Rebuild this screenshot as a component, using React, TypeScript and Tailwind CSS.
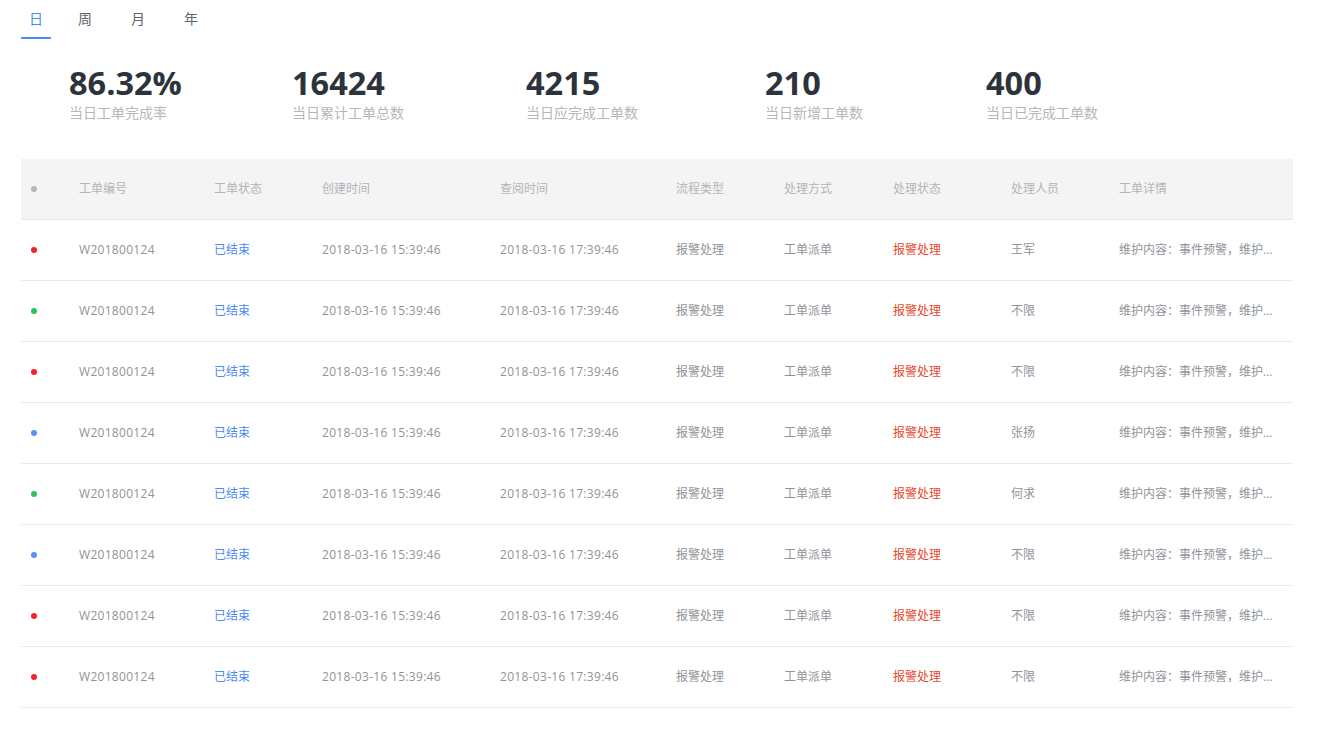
import React from "react";

const stats = [
  { v: "86.32%", l: "当日工单完成率", w: "w-[223px]" },
  { v: "16424", l: "当日累计工单总数", w: "w-[234px]" },
  { v: "4215", l: "当日应完成工单数", w: "w-[239px]" },
  { v: "210", l: "当日新增工单数", w: "w-[221px]" },
  { v: "400", l: "当日已完成工单数", w: "w-[200px]" },
];

const rows = [
  { dot: "bg-[#f5222d]", person: "王军" },
  { dot: "bg-[#2fc25b]", person: "不限" },
  { dot: "bg-[#f5222d]", person: "不限" },
  { dot: "bg-[#5b8ff9]", person: "张扬" },
  { dot: "bg-[#2fc25b]", person: "何求" },
  { dot: "bg-[#5b8ff9]", person: "不限" },
  { dot: "bg-[#f5222d]", person: "不限" },
  { dot: "bg-[#f5222d]", person: "不限" },
];

const tabs = [
  { t: "日", m: "" },
  { t: "周", m: "ml-[19px]" },
  { t: "月", m: "ml-[23px]" },
  { t: "年", m: "ml-[23px]" },
];

const grid =
  "grid grid-cols-[58px_135px_108px_178px_176px_108px_109px_118px_108px_1fr] items-center";

export default function App() {
  return (
    <div
      className="w-[1321px] h-[746px] bg-white pl-[21px] pr-[28px]"
      style={{ fontFamily: '"Open Sans", "Noto Sans CJK SC", sans-serif' }}
    >
      <div className="flex">
        {tabs.map((t, i) => (
          <div
            key={t.t}
            className={
              "w-[30px] h-[39px] flex items-center justify-center text-[14px] border-b-2 " +
              t.m +
              " " +
              (i === 0
                ? "text-[#4a8af4] border-[#4a8af4]"
                : "text-[#5f6368] border-transparent")
            }
          >
            {t.t}
          </div>
        ))}
      </div>

      <div className="flex pl-[48px] mt-[25px]">
        {stats.map((s) => (
          <div key={s.v} className={"flex flex-col " + s.w}>
            <div className="text-[32.5px] leading-[38px] font-bold text-[#2d333b]">{s.v}</div>
            <div className="text-[14px] leading-[20px] text-[#b4b7bd] mt-[1px]">{s.l}</div>
          </div>
        ))}
      </div>

      <div className="mt-[36px] text-[12px]">
        <div className={grid + " h-[61px] bg-[#f4f4f4] border-b border-[#e9e9e9] text-[#b2b4b9]"}>
          <div className="pl-[10px]">
            <span className="block w-[6px] h-[6px] rounded-full bg-[#b4b6bb]" />
          </div>
          <div>工单编号</div>
          <div>工单状态</div>
          <div>创建时间</div>
          <div>查阅时间</div>
          <div>流程类型</div>
          <div>处理方式</div>
          <div>处理状态</div>
          <div>处理人员</div>
          <div>工单详情</div>
        </div>
        {rows.map((r, i) => (
          <div key={i} className={grid + " h-[61px] border-b border-[#e9e9e9] text-[#919399]"}>
            <div className="pl-[10px]">
              <span className={"block w-[6px] h-[6px] rounded-full " + r.dot} />
            </div>
            <div className="tracking-[0.3px]">W201800124</div>
            <div className="text-[#4a8af4]">已结束</div>
            <div className="tracking-[0.3px]">2018-03-16 15:39:46</div>
            <div className="tracking-[0.3px]">2018-03-16 17:39:46</div>
            <div>报警处理</div>
            <div>工单派单</div>
            <div className="text-[#e8472d]">报警处理</div>
            <div>{r.person}</div>
            <div className="whitespace-nowrap">维护内容：事件预警，维护...</div>
          </div>
        ))}
      </div>
    </div>
  );
}
